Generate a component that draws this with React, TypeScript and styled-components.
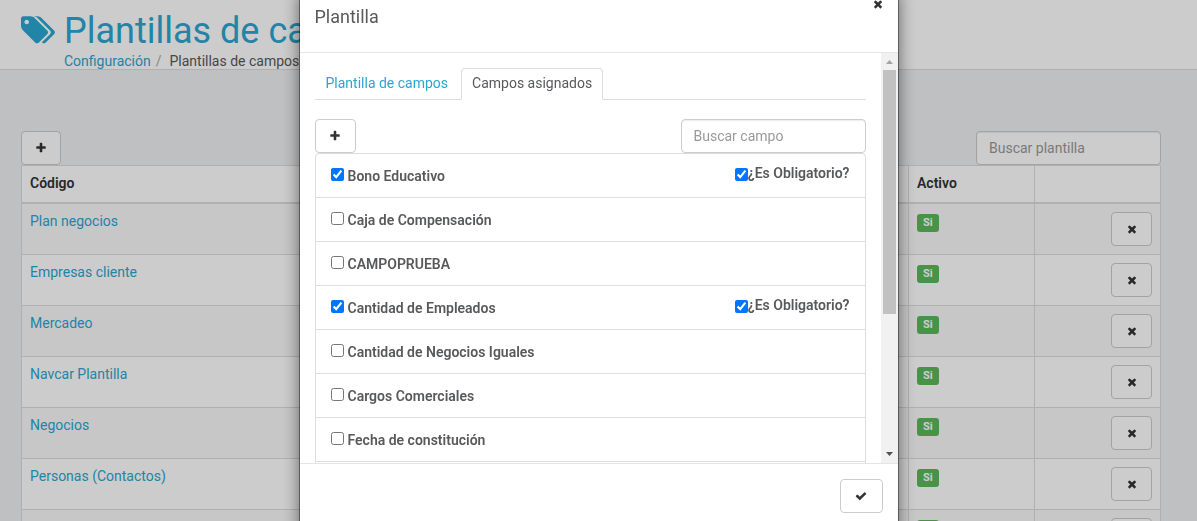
import React from "react";
import styled, { createGlobalStyle, css } from "styled-components";

const GlobalStyle = createGlobalStyle`
  *, *::before, *::after { box-sizing: border-box; }
  html { overflow: hidden; }
  body {
    margin: 0;
    background: #eff0f3;
    color: #58595b;
    font-family: Roboto, "Liberation Sans", sans-serif;
    font-size: 14px;
    line-height: 20px;
  }
  button, input { font-family: inherit; font-size: inherit; line-height: inherit; }
`;

const GLYPHS = {
  plus: "M1600 736v192q0 40-28 68t-68 28h-416v416q0 40-28 68t-68 28h-192q-40 0-68-28t-28-68v-416h-416q-40 0-68-28t-28-68v-192q0-40 28-68t68-28h416v-416q0-40 28-68t68-28h192q40 0 68 28t28 68v416h416q40 0 68 28t28 68z",
  times:
    "M1490 1322q0 40-28 68l-136 136q-28 28-68 28t-68-28l-294-294-294 294q-28 28-68 28t-68-28l-136-136q-28-28-28-68t28-68l294-294-294-294q-28-28-28-68t28-68l136-136q28-28 68-28t68 28l294 294 294-294q28-28 68-28t68 28l136 136q28 28 28 68t-28 68l-294 294 294 294q28 28 28 68z",
  check:
    "M1671 566q0 40-28 68l-724 724-136 136q-28 28-68 28t-68-28l-136-136-362-362q-28-28-28-68t28-68l136-136q28-28 68-28t68 28l294 295 656-657q28-28 68-28t68 28l136 136q28 28 28 68z",
};

const Glyph = ({ name }: { name: keyof typeof GLYPHS }) => (
  <svg width="12" height="12" viewBox="0 0 1792 1792" fill="currentColor" aria-hidden="true">
    <path d={GLYPHS[name]} />
  </svg>
);

const TagsIcon = () => (
  <svg width="35" height="32" viewBox="0 0 1960 1792" fill="currentColor" aria-hidden="true">
    <path d="M448 448q0-53-37.500-90.500t-90.500-37.500-90.500 37.500-37.500 90.500 37.500 90.500 90.500 37.500 90.500-37.500 37.500-90.500zm1067 576q0 53-37 90l-491 492q-39 37-91 37-53 0-90-37l-715-716q-38-37-64.500-101t-26.500-117v-416q0-52 38-90t90-38h416q53 0 117 26.500t102 64.500l715 714q37 39 37 91zm384 0q0 53-37 90l-491 492q-39 37-91 37-36 0-59-14t-53-45l470-470q37-37 37-90 0-52-37-91l-715-714q-38-38-102-64.500t-117-26.500h224q53 0 117 26.500t102 64.500l715 714q37 39 37 91z" />
  </svg>
);

const PageHeader = styled.header`
  display: flex;
  gap: 8px;
  height: 70px;
  padding: 11px 21px 0;
  background: #fff;
  border-bottom: 1px solid #dcdcde;
  color: #2ba6d0;
`;

const HeaderIcon = styled.div`
  padding-top: 3px;
`;

const PageTitle = styled.h1`
  margin: 0;
  font-size: 36px;
  font-weight: 400;
  line-height: 40px;
`;

const Breadcrumb = styled.nav`
  color: #58595b;
  a { color: #2ba6d0; text-decoration: none; }
`;

const Slash = styled.span`
  padding: 0 8px 0 5px;
  color: #aaa;
`;

const Content = styled.main`
  padding: 61px 36px 0 21px;
`;

const Toolbar = styled.div`
  display: flex;
  justify-content: space-between;
`;

const BUTTON_WIDTHS = { small: 40, medium: 41, large: 43 };

const IconButton = styled.button<{ $size?: keyof typeof BUTTON_WIDTHS }>`
  display: inline-flex;
  align-items: center;
  justify-content: center;
  width: ${(p) => BUTTON_WIDTHS[p.$size ?? "medium"]}px;
  height: 34px;
  padding: 0 0 1px;
  background: #fff;
  border: 1px solid #ccc;
  border-radius: 4px;
  color: #333;
`;

const SearchInput = styled.input`
  width: 185px;
  height: 34px;
  padding: 6px 12px;
  border: 1px solid #ccc;
  border-radius: 4px;
  background: #fff;
  box-shadow: inset 0 1px 1px rgba(0, 0, 0, 0.075);
  &::placeholder { color: #999; opacity: 1; }
`;

const Table = styled.table`
  width: 100%;
  table-layout: fixed;
  border-collapse: collapse;
  background: #fff;
  border: 1px solid #ddd;
`;

const cell = css`
  padding: 8px;
  border: 1px solid #ddd;
  text-align: left;
  vertical-align: top;
`;

const HeadCell = styled.th<{ $width?: number }>`
  ${cell}
  width: ${(p) => (p.$width ? `${p.$width}px` : "auto")};
  padding-bottom: 10px;
  border-bottom-width: 2px;
  color: #333;
  font-weight: 600;
  line-height: 18px;
`;

const Row = styled.tr`
  &:nth-child(odd) { background: #f9f9f9; }
`;

const Cell = styled.td<{ $right?: boolean }>`
  ${cell}
  line-height: 18px;
  text-align: ${(p) => (p.$right ? "right" : "left")};
  a { color: #2ba6d0; text-decoration: none; }
  button { vertical-align: top; }
`;

const Badge = styled.span`
  display: inline-block;
  padding: 0 6px;
  margin-top: 2px;
  background: #5cb85c;
  border-radius: 3px;
  color: #fff;
  font-size: 11px;
  font-weight: 700;
  line-height: 18px;
  vertical-align: top;
`;

const Backdrop = styled.div`
  position: fixed;
  inset: 0;
  display: flex;
  align-items: flex-start;
  justify-content: center;
  background: rgba(0, 0, 0, 0.2);
`;

const Dialog = styled.section`
  width: 600px;
  max-width: 100%;
  margin-top: -11px;
  background: #fff;
  background-clip: padding-box;
  border: 1px solid rgba(0, 0, 0, 0.4);
  box-shadow: 0 5px 15px rgba(0, 0, 0, 0.5);
`;

const DialogHeader = styled.header`
  display: flex;
  justify-content: space-between;
  align-items: flex-start;
  padding: 0 14px 0 15px;
  border-bottom: 1px solid #e5e5e5;
`;

const DialogTitle = styled.h2`
  margin: 0;
  padding: 15px 0 23px;
  font-size: 18px;
  font-weight: 400;
  line-height: 24px;
`;

const CloseButton = styled.button`
  display: flex;
  align-items: center;
  height: 28px;
  padding: 0;
  border: 0;
  background: none;
  color: #333;
`;

const ScrollArea = styled.div`
  display: flex;
  height: calc(100vh - 111px);
  overflow: hidden;
`;

const DialogBody = styled.div`
  flex: 1;
  padding: 15px;
`;

const Scrollbar = styled.div`
  display: flex;
  flex-direction: column;
  width: 17px;
  background: #f1f1f1;
`;

const ScrollArrow = styled.svg`
  flex: none;
  width: 17px;
  height: 17px;
`;

const Track = styled.div`
  flex: 1;
  padding: 0 2px;
`;

const Thumb = styled.div`
  height: 65%;
  background: #c1c1c1;
`;

const Tabs = styled.div`
  display: flex;
  gap: 2px;
  margin-bottom: 19px;
  box-shadow: inset 0 -1px 0 #ddd;
`;

const Tab = styled.button<{ $active?: boolean }>`
  height: 32px;
  padding: 0 10px 2px;
  border: 1px solid ${(p) => (p.$active ? "#ddd" : "transparent")};
  border-bottom-color: ${(p) => (p.$active ? "#fff" : "transparent")};
  border-radius: 4px 4px 0 0;
  background: ${(p) => (p.$active ? "#fff" : "transparent")};
  color: ${(p) => (p.$active ? "#58595b" : "#2ba6d0")};
`;

const FieldList = styled.ul`
  margin: 0;
  padding: 0;
  list-style: none;
  border: 1px solid #ddd;
  border-radius: 4px;
`;

const FieldItem = styled.li`
  display: flex;
  justify-content: space-between;
  align-items: flex-start;
  height: 44px;
  padding: 10px 15px;
  border-bottom: 1px solid #ddd;
`;

const CheckLabel = styled.label<{ $tight?: boolean }>`
  display: flex;
  align-items: flex-start;
  gap: ${(p) => (p.$tight ? 0 : 4)}px;
  font-weight: 600;
  line-height: ${(p) => (p.$tight ? 18 : 20)}px;
  span { padding-top: ${(p) => (p.$tight ? 0 : 2)}px; }
`;

const Checkbox = styled.input`
  width: 13px;
  height: 13px;
  margin: 4px 0 0;
`;

const DialogFooter = styled.footer`
  display: flex;
  justify-content: flex-end;
  padding: 15px;
  border-top: 1px solid #e5e5e5;
`;

const templates = [
  "Plan negocios",
  "Empresas cliente",
  "Mercadeo",
  "Navcar Plantilla",
  "Negocios",
  "Personas (Contactos)",
  "",
];

const fields = [
  { name: "Bono Educativo", assigned: true },
  { name: "Caja de Compensación", assigned: false },
  { name: "CAMPOPRUEBA", assigned: false },
  { name: "Cantidad de Empleados", assigned: true },
  { name: "Cantidad de Negocios Iguales", assigned: false },
  { name: "Cargos Comerciales", assigned: false },
  { name: "Fecha de constitución", assigned: false },
];

export default function App() {
  return (
    <>
      <GlobalStyle />
      <PageHeader>
        <HeaderIcon>
          <TagsIcon />
        </HeaderIcon>
        <div>
          <PageTitle>Plantillas de campos</PageTitle>
          <Breadcrumb>
            <a href="#configuracion">Configuración</a>
            <Slash>/</Slash>
            <span>Plantillas de campos</span>
          </Breadcrumb>
        </div>
      </PageHeader>
      <Content>
        <Toolbar>
          <IconButton $size="small" aria-label="Agregar plantilla">
            <Glyph name="plus" />
          </IconButton>
          <SearchInput placeholder="Buscar plantilla" aria-label="Buscar plantilla" />
        </Toolbar>
        <Table>
          <thead>
            <tr>
              <HeadCell>Código</HeadCell>
              <HeadCell $width={126}>Activo</HeadCell>
              <HeadCell $width={126} />
            </tr>
          </thead>
          <tbody>
            {templates.map((name) => (
              <Row key={name}>
                <Cell>
                  <a href="#plantilla">{name}</a>
                </Cell>
                <Cell>
                  <Badge>Si</Badge>
                </Cell>
                <Cell $right>
                  <IconButton aria-label={`Eliminar ${name}`}>
                    <Glyph name="times" />
                  </IconButton>
                </Cell>
              </Row>
            ))}
          </tbody>
        </Table>
      </Content>
      <Backdrop>
        <Dialog role="dialog" aria-labelledby="dialog-title">
          <DialogHeader>
            <DialogTitle id="dialog-title">Plantilla</DialogTitle>
            <CloseButton aria-label="Cerrar">
              <Glyph name="times" />
            </CloseButton>
          </DialogHeader>
          <ScrollArea>
            <DialogBody>
              <Tabs role="tablist">
                <Tab role="tab">Plantilla de campos</Tab>
                <Tab role="tab" aria-selected $active>
                  Campos asignados
                </Tab>
              </Tabs>
              <Toolbar>
                <IconButton aria-label="Agregar campo">
                  <Glyph name="plus" />
                </IconButton>
                <SearchInput placeholder="Buscar campo" aria-label="Buscar campo" />
              </Toolbar>
              <FieldList>
                {fields.map((field) => (
                  <FieldItem key={field.name}>
                    <CheckLabel>
                      <Checkbox type="checkbox" defaultChecked={field.assigned} />
                      <span>{field.name}</span>
                    </CheckLabel>
                    {field.assigned && (
                      <CheckLabel $tight>
                        <Checkbox type="checkbox" defaultChecked />
                        <span>¿Es Obligatorio?</span>
                      </CheckLabel>
                    )}
                  </FieldItem>
                ))}
                <FieldItem />
              </FieldList>
            </DialogBody>
            <Scrollbar aria-hidden="true">
              <ScrollArrow viewBox="0 0 17 17">
                <path d="M5 11h7L8.500 7z" fill="#a3a3a3" />
              </ScrollArrow>
              <Track>
                <Thumb />
              </Track>
              <ScrollArrow viewBox="0 0 17 17">
                <path d="M5 6h7L8.500 10z" fill="#505050" />
              </ScrollArrow>
            </Scrollbar>
          </ScrollArea>
          <DialogFooter>
            <IconButton $size="large" aria-label="Aceptar">
              <Glyph name="check" />
            </IconButton>
          </DialogFooter>
        </Dialog>
      </Backdrop>
    </>
  );
}
